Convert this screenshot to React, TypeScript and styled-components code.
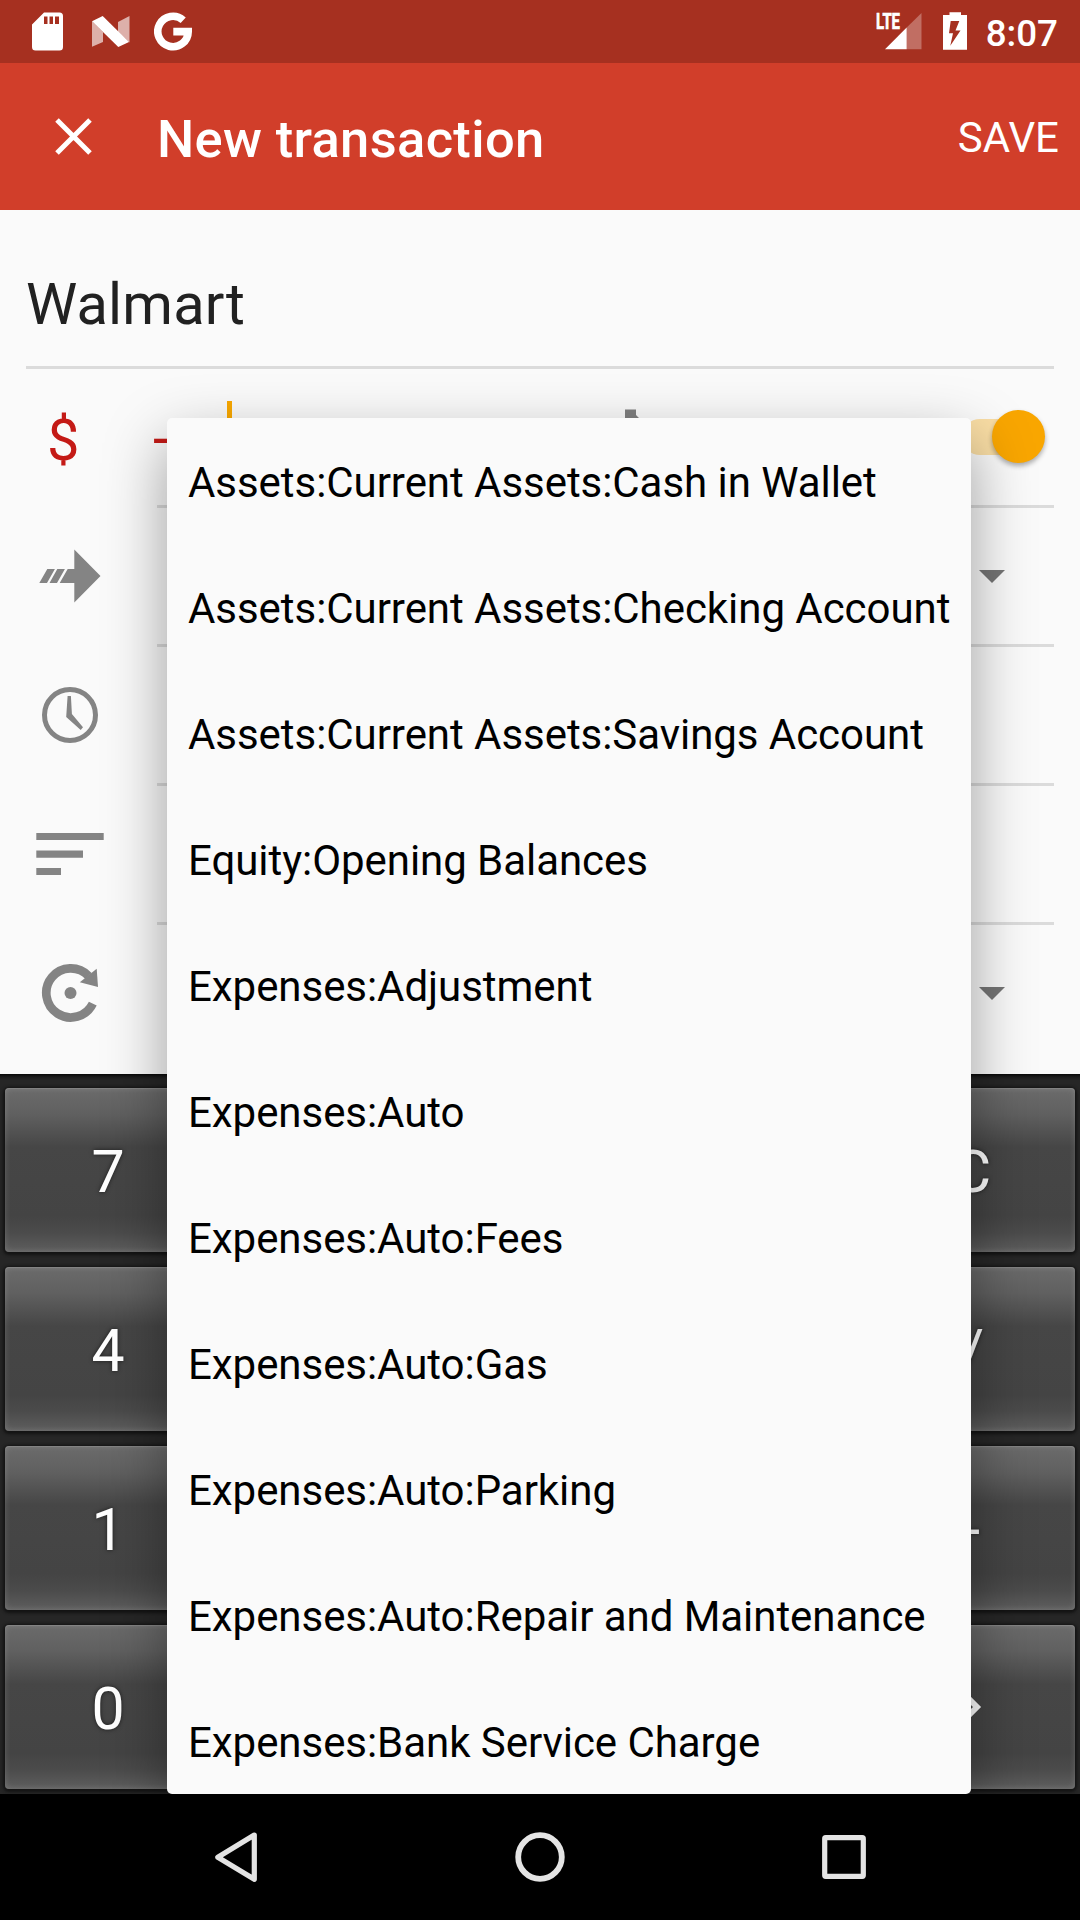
import React from "react";
import styled, { createGlobalStyle } from "styled-components";

const GlobalStyle = createGlobalStyle`
  * { box-sizing: border-box; }
  html, body { margin: 0; padding: 0; }
  body {
    width: 1080px;
    height: 1920px;
    overflow: hidden;
    background: #000;
    font-family: Roboto, "Noto Sans", sans-serif;
  }
  svg { display: block; flex: none; }
`;

const Screen = styled.div`
  position: relative;
  display: flex;
  flex-direction: column;
  width: 1080px;
  height: 1920px;
  overflow: hidden;
  background: #fafafa;
`;

const StatusBar = styled.header`
  display: flex;
  justify-content: space-between;
  height: 63px;
  padding: 0 22px 0 32px;
  background: #a63020;
  color: #fff;
`;

const StatusGroup = styled.div<{ $gap: number }>`
  display: flex;
  gap: ${(p) => p.$gap}px;
  height: 63px;
`;

const GoogleIcon = styled.svg`
  margin-left: -4px;
`;

const Clock = styled.span`
  margin-left: -2px;
  font-size: 36.75px;
  font-weight: 500;
  line-height: 67px;
`;

const AppBar = styled.div`
  display: flex;
  align-items: center;
  height: 147px;
  padding: 0 21px 0 55px;
  background: #d13e2a;
  color: #fff;
`;

const Title = styled.h1`
  flex: 1;
  margin: 0 0 0 65px;
  padding-top: 5px;
  font-size: 52.5px;
  font-weight: 500;
  line-height: 60px;
  letter-spacing: 0.33px;
`;

const SaveButton = styled.button`
  padding: 2px 0 0;
  border: 0;
  background: none;
  color: #fff;
  font: 400 42px/50px Roboto, sans-serif;
`;

const Form = styled.main`
  display: flex;
  flex-direction: column;
  height: 864px;
`;

const Payee = styled.div`
  height: 159px;
  margin: 0 26px;
  padding-top: 60px;
  border-bottom: 3px solid #dbdbdb;
  color: #212121;
  font-size: 57.75px;
  line-height: 68px;
  letter-spacing: 0.2px;
`;

const Row = styled.div<{ $last?: boolean }>`
  display: flex;
  height: ${(p) => (p.$last ? 149 : 139)}px;
`;

const IconCell = styled.div`
  display: flex;
  width: 157px;
  height: 136px;
`;

const Currency = styled.span`
  padding: 2px 0 0 47px;
  color: #c41a16;
  font-size: 57.75px;
  line-height: 139px;
`;

const Field = styled.div<{ $last?: boolean }>`
  display: flex;
  width: 897px;
  height: 100%;
  border-bottom: ${(p) => (p.$last ? "0" : "3px solid #dbdbdb")};
`;

const Amount = styled.span`
  width: 74px;
  margin-left: -4px;
  padding-top: 1px;
  color: #c41a16;
  font-size: 57.75px;
  line-height: 136px;
`;

const Caret = styled.span`
  width: 5px;
  height: 72px;
  margin-top: 32px;
  background: #f9a800;
`;

const CategoryIcon = styled.div`
  width: 26px;
  height: 60px;
  margin: 40px 0 0 393px;
`;

const Switch = styled.div`
  display: flex;
  align-items: center;
  justify-content: flex-end;
  width: 76px;
  height: 36px;
  margin: 50px 16px 0 auto;
  border-radius: 18px;
  background: rgba(249, 168, 0, 0.34);
`;

const Thumb = styled.i`
  flex: none;
  width: 53px;
  height: 53px;
  margin: -1px -7px 0 0;
  border-radius: 50%;
  background: #f9a600;
  box-shadow: 0 3px 5px rgba(0, 0, 0, 0.32);
`;

const Arrow = styled.i`
  width: 0;
  height: 0;
  margin: 62px 49.5px 0 auto;
  border: solid transparent;
  border-width: 13px 13px 0;
  border-top-color: #757575;
`;

const Keypad = styled.div`
  display: grid;
  grid-template-columns: repeat(5, 206px);
  grid-auto-rows: 164px;
  gap: 15px 10px;
  height: 720px;
  padding: 14px 5px 0;
  background: linear-gradient(#080808 0, #1c1c1c 3px, #262626 6px);
`;

const Key = styled.button`
  display: flex;
  align-items: center;
  justify-content: center;
  padding: 4px 0 0;
  border: 0;
  border-radius: 4px;
  background: linear-gradient(
    #6b6b6b 0,
    #606060 16%,
    #464646 36%,
    #444 78%,
    #4b4b4b 88%,
    #5e5e5e 100%
  );
  box-shadow: 0 1px 3px 2px #131313, inset 0 0 6px rgba(255, 255, 255, 0.17),
    inset 0 1px 1px rgba(255, 255, 255, 0.12);
  color: #fff;
  font: 400 59px/70px Roboto, sans-serif;
  text-shadow: 0 0 4px rgba(0, 0, 0, 0.6);
`;

const NavBar = styled.nav`
  display: flex;
  justify-content: space-between;
  height: 126px;
  padding: 0 211px;
  background: #000;
`;

const PopupClip = styled.div`
  position: absolute;
  left: 0;
  top: 0;
  width: 1080px;
  height: 1794px;
  overflow: hidden;
  padding: 418px 109px 0 167px;
`;

const Popup = styled.ul`
  width: 804px;
  height: 1376px;
  margin: 0;
  padding: 0;
  overflow: hidden;
  list-style: none;
  border-radius: 5px;
  background: #fafafa;
  box-shadow: 0 24px 62px rgba(0, 0, 0, 0.38);
`;

const Option = styled.li`
  height: 126px;
  padding: 2px 21px 0;
  color: #000;
  font-size: 42px;
  line-height: 126px;
  letter-spacing: -0.05px;
  white-space: nowrap;
`;

const accounts = [
  "Assets:Current Assets:Cash in Wallet",
  "Assets:Current Assets:Checking Account",
  "Assets:Current Assets:Savings Account",
  "Equity:Opening Balances",
  "Expenses:Adjustment",
  "Expenses:Auto",
  "Expenses:Auto:Fees",
  "Expenses:Auto:Gas",
  "Expenses:Auto:Parking",
  "Expenses:Auto:Repair and Maintenance",
  "Expenses:Bank Service Charge",
];

const NextGlyph = () => (
  <svg width="26" height="44" viewBox="0 0 26 44" fill="none" stroke="#fff" strokeWidth="5.8">
    <path d="M2 4L18 20L2 36" />
  </svg>
);

const keys: React.ReactNode[] = [
  "7", null, null, null, "C",
  "4", null, null, null, "/",
  "1", null, null, null, "-",
  "0", null, null, null, <NextGlyph key="next" />,
];

const GREY = "#848484";

export default function App() {
  return (
    <>
      <GlobalStyle />
      <Screen>
        <StatusBar>
          <StatusGroup $gap={28}>
            <svg width="32" height="63" viewBox="32 0 32 63">
              <path
                fillRule="evenodd"
                fill="#fff"
                d="M44 12.5H59.5Q63 12.5 63 16V47Q63 50.5 59.5 50.5H35.5Q32 50.5 32 47V24.5ZM44 16.5V24H47.5V16.5ZM49.5 16.5V24H53V16.5ZM55 16.5V24H59V16.5Z"
              />
            </svg>
            <svg width="38" height="63" viewBox="92 0 38 63" fill="#fff">
              <path opacity=".62" d="M92 21.3L103 32V42L92 46.8ZM129.5 16L118 22V32L129.5 42.5Z" />
              <path d="M92 21.3L102.7 16L129 42L118.3 47Z" />
            </svg>
            <GoogleIcon width="40" height="63" viewBox="154 0 40 63" fill="none" stroke="#fff" strokeWidth="7.6">
              <path d="M183.2 20.2A15.2 15.2 0 1 0 188.2 31.6H173.3" />
            </GoogleIcon>
          </StatusGroup>
          <StatusGroup $gap={21}>
            <svg width="46" height="63" viewBox="876 0 46 63" fill="#fff">
              <path opacity=".3" d="M906.7 27.5L921.5 13V49.3H906.7Z" />
              <path d="M885 49.3L906.7 27.5V49.3Z" />
              <text
                x="876"
                y="28.8"
                fontSize="22"
                fontWeight="700"
                stroke="#fff"
                strokeWidth=".7"
                textLength="24"
                lengthAdjust="spacingAndGlyphs"
              >
                LTE
              </text>
            </svg>
            <svg width="24" height="63" viewBox="943 0 24 63">
              <path
                fill="#fff"
                fillRule="evenodd"
                d="M949.5 12.3H961V15H967V49.7H943V15H949.5ZM950.7 21L949 33.3H953L950.3 45.7L960.5 30.5H955.5L959.3 21Z"
              />
            </svg>
            <Clock>8:07</Clock>
          </StatusGroup>
        </StatusBar>

        <AppBar>
          <svg width="37" height="37" viewBox="0 0 37 37" stroke="#fff" strokeWidth="5">
            <path d="M2 2L35 35M35 2L2 35" />
          </svg>
          <Title>New transaction</Title>
          <SaveButton>SAVE</SaveButton>
        </AppBar>

        <Form>
          <Payee>Walmart</Payee>
          <Row>
            <IconCell>
              <Currency>$</Currency>
            </IconCell>
            <Field>
              <Amount>-</Amount>
              <Caret />
              <CategoryIcon>
                <svg width="26" height="60" viewBox="0 0 26 60" fill="#7f7f7f">
                  <path d="M0 0.5H11V6L20 15V30H0Z" />
                </svg>
              </CategoryIcon>
              <Switch>
                <Thumb />
              </Switch>
            </Field>
          </Row>
          <Row>
            <IconCell>
              <svg width="157" height="136" viewBox="0 508 157 136" fill={GREY}>
                <path d="M100.5 576L74.3 549.5V569H67.7L59.7 583H74.3V602.5ZM39.3 583L47.3 569H54.9L47 583ZM49.5 583L57.3 569H64.9L57 583Z" />
              </svg>
            </IconCell>
            <Field>
              <Arrow />
            </Field>
          </Row>
          <Row>
            <IconCell>
              <svg width="157" height="136" viewBox="0 647 157 136" fill={GREY}>
                <circle cx="70" cy="715" r="25.5" fill="none" stroke={GREY} strokeWidth="5" />
                <path d="M67.6 696H70.9L71.9 714L83 727.3L80.7 730L66.2 717Z" />
              </svg>
            </IconCell>
            <Field />
          </Row>
          <Row>
            <IconCell>
              <svg width="157" height="136" viewBox="0 786 157 136" fill={GREY}>
                <path d="M36.3 833H103.7V840H36.3ZM36.3 850.5H83V857.7H36.3ZM36.3 868H61V875H36.3Z" />
              </svg>
            </IconCell>
            <Field />
          </Row>
          <Row $last>
            <IconCell>
              <svg width="157" height="136" viewBox="0 925 157 136" fill={GREY}>
                <path
                  fill="none"
                  stroke={GREY}
                  strokeWidth="8.7"
                  d="M92.8 1003.7A24.5 24.5 0 1 1 88.5 976"
                />
                <path d="M96.7 968.7L98 987L79.8 982.3Z" />
                <circle cx="70.5" cy="993" r="6" />
              </svg>
            </IconCell>
            <Field $last>
              <Arrow />
            </Field>
          </Row>
        </Form>

        <Keypad>
          {keys.map((label, i) => (
            <Key key={i}>{label}</Key>
          ))}
        </Keypad>

        <NavBar>
          <svg width="50" height="126" viewBox="211 1794 50 126" fill="none" stroke="#e4e4e4" strokeWidth="5.2">
            <path strokeLinejoin="round" d="M254.3 1835L217.8 1857.3L254.3 1879.3Z" />
          </svg>
          <svg width="50" height="126" viewBox="515 1794 50 126" fill="none" stroke="#e4e4e4" strokeWidth="5.8">
            <circle cx="540" cy="1857" r="21.8" />
          </svg>
          <svg width="50" height="126" viewBox="819 1794 50 126" fill="none" stroke="#e4e4e4" strokeWidth="5.2">
            <rect x="824.7" y="1837.7" width="38.6" height="38.6" rx="1" />
          </svg>
        </NavBar>

        <PopupClip>
          <Popup>
            {accounts.map((name) => (
              <Option key={name}>{name}</Option>
            ))}
          </Popup>
        </PopupClip>
      </Screen>
    </>
  );
}
